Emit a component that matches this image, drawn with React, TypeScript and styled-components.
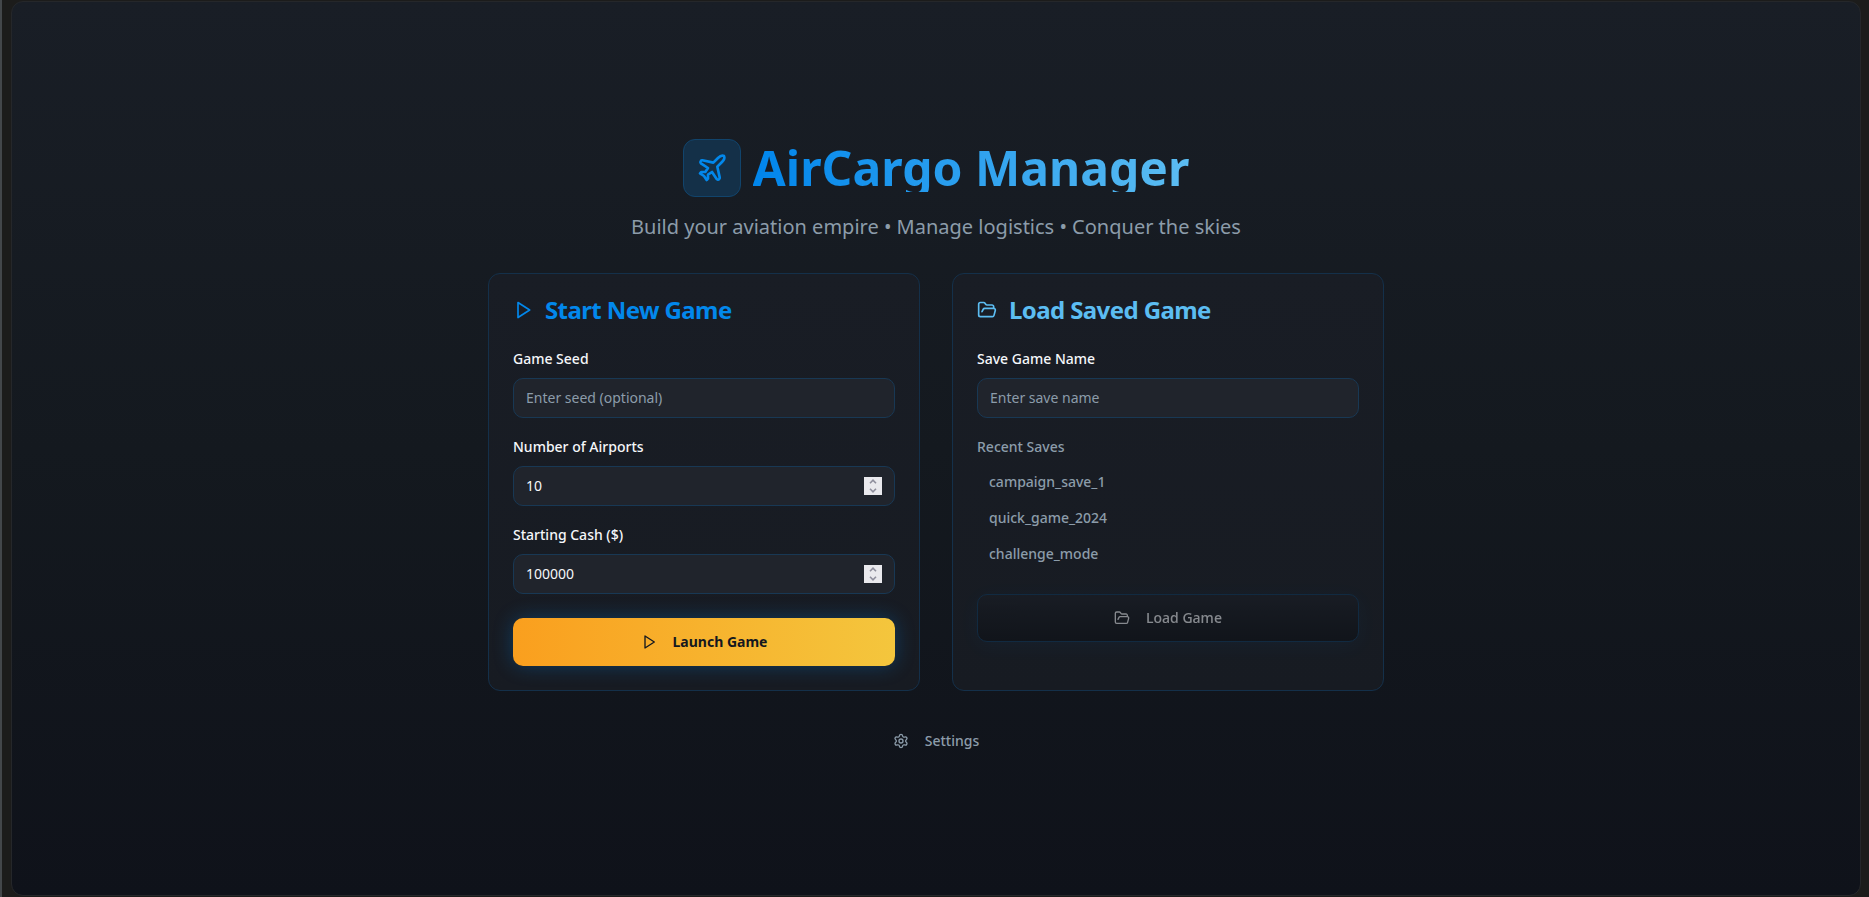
import React, { useState } from "react";
import styled, { createGlobalStyle, css } from "styled-components";
import { FolderOpen, Plane, Settings } from "lucide-react";

const GlobalStyle = createGlobalStyle`
  *, *::before, *::after { box-sizing: border-box; }
  body {
    margin: 0;
    background: #1c1c1b;
    color: #f5f7fa;
    font-family: "Noto Sans", "Open Sans", sans-serif;
    font-size: 14px;
  }
  button, input { font: inherit; color: inherit; }
  h1, h2, h3, p, ul { margin: 0; padding: 0; }
  svg { flex: none; }
`;

const Page = styled.div`
  display: flex;
  min-height: 100vh;
  padding: 1px 8px 1px 9px;
  border-left: 2px solid #43474a;
`;

const Screen = styled.main`
  flex: 1;
  display: flex;
  flex-direction: column;
  align-items: center;
  justify-content: center;
  gap: 32px;
  padding: 24px;
  border: 1px solid #25272a;
  border-radius: 12px;
  background: linear-gradient(180deg, #191e26 0%, #14191f 50%, #0f121a 100%);
`;

const Header = styled.header`
  display: flex;
  flex-direction: column;
  align-items: center;
  gap: 16px;
  text-align: center;
`;

const Brand = styled.div`
  display: flex;
  align-items: center;
  gap: 12px;
`;

const LogoTile = styled.div`
  display: flex;
  padding: 12px;
  border: 1px solid #11446c;
  border-radius: 12px;
  background: #143048;
  color: #0288ec;
`;

const Title = styled.h1`
  font-size: 48px;
  line-height: 48px;
  font-weight: 700;
  background: linear-gradient(90deg, #0085eb, #5cbdf2);
  background-clip: text;
  -webkit-background-clip: text;
  color: transparent;
`;

const Tagline = styled.p`
  font-size: 20px;
  line-height: 28px;
  color: #8c9caa;
`;

const Cards = styled.div`
  display: grid;
  grid-template-columns: repeat(auto-fit, minmax(320px, 1fr));
  gap: 32px;
  width: 100%;
  max-width: 896px;
`;

const Card = styled.section`
  display: flex;
  flex-direction: column;
  gap: 28px;
  padding: 24px;
  border: 1px solid #14304a;
  border-radius: 12px;
  background: linear-gradient(180deg, #191d25, #171b22);
`;

const CardTitle = styled.h2<{ $tone: string }>`
  display: flex;
  align-items: center;
  gap: 12px;
  font-size: 24px;
  line-height: 24px;
  font-weight: 700;
  letter-spacing: -0.025em;
  color: ${(p) => p.$tone};
`;

const Form = styled.form`
  display: flex;
  flex-direction: column;
  gap: 24px;
`;

const Fields = styled.div`
  display: flex;
  flex-direction: column;
  gap: 20px;
`;

const Field = styled.div`
  display: flex;
  flex-direction: column;
  gap: 10px;
`;

const captionText = css`
  font-size: 14px;
  line-height: 18px;
  font-weight: 500;
`;

const Label = styled.label`
  ${captionText}
`;

const Caption = styled.h3`
  ${captionText}
  color: #8c9caa;
`;

const InputWrap = styled.div`
  position: relative;
  display: flex;
`;

const Input = styled.input`
  width: 100%;
  height: 40px;
  padding: 0 12px;
  border: 1px solid #183854;
  border-radius: 10px;
  outline: none;
  background: #20242c;
  appearance: textfield;

  &::placeholder { color: #8c9caa; opacity: 1; }
  &::-webkit-inner-spin-button,
  &::-webkit-outer-spin-button { appearance: none; margin: 0; }
  &:focus-visible { border-color: #0288ec; }
`;

const Stepper = styled.div`
  position: absolute;
  top: 11px;
  right: 13px;
  display: flex;
  flex-direction: column;
  width: 18px;
  height: 18px;
  padding-top: 1px;
  background: #e9e9ed;
`;

const Step = styled.button`
  display: flex;
  flex: 1;
  align-items: center;
  justify-content: center;
  padding: 0;
  border: 0;
  background: none;
  color: #8f8f9d;
`;

const buttonBase = css`
  display: flex;
  align-items: center;
  justify-content: center;
  gap: 16px;
  border-radius: 10px;
  font-size: 14px;
  line-height: 20px;
  cursor: pointer;
`;

const LaunchButton = styled.button`
  ${buttonBase}
  height: 48px;
  border: 0;
  background: linear-gradient(90deg, #fa9f1e, #f4c63d);
  box-shadow: 0 0 20px rgba(2, 136, 236, 0.3);
  color: #14181f;
  font-weight: 700;
`;

const LoadButton = styled.button`
  ${buttonBase}
  height: 48px;
  border: 1px solid #0c3a60;
  background: linear-gradient(180deg, #1a1e26, #0c0f14);
  box-shadow: 0 4px 20px rgba(2, 136, 236, 0.1);
  font-weight: 500;
  opacity: 0.5;
`;

const SettingsButton = styled.button`
  ${buttonBase}
  height: 36px;
  padding: 0 12px;
  border: 0;
  background: none;
  color: #8c9caa;
  font-weight: 500;
`;

const SaveList = styled.ul`
  display: flex;
  flex-direction: column;
  gap: 4px;
  list-style: none;
`;

const SaveItem = styled.button`
  width: 100%;
  height: 32px;
  padding: 0 12px;
  border: 0;
  border-radius: 8px;
  background: none;
  color: #8c9caa;
  font-weight: 500;
  text-align: left;
  cursor: pointer;
`;

const recentSaves = ["campaign_save_1", "quick_game_2024", "challenge_mode"];

function PlayIcon({ size }: { size: number }) {
  return (
    <svg
      width={size}
      height={size}
      viewBox="0 0 24 24"
      fill="none"
      stroke="currentColor"
      strokeWidth="2"
      strokeLinecap="round"
      strokeLinejoin="round"
      aria-hidden="true"
    >
      <polygon points="6 3 20 12 6 21 6 3" />
    </svg>
  );
}

function Chevron({ down }: { down?: boolean }) {
  return (
    <svg width="8" height="5" viewBox="0 0 8 5" fill="none" stroke="currentColor" strokeWidth="1.6">
      <path d={down ? "M1 .8 4 3.8 7 .8" : "M1 4.2 4 1.2 7 4.2"} />
    </svg>
  );
}

interface NumberFieldProps {
  id: string;
  label: string;
  initial: number;
  step: number;
}

function NumberField({ id, label, initial, step }: NumberFieldProps) {
  const [value, setValue] = useState(initial);
  return (
    <Field>
      <Label htmlFor={id}>{label}</Label>
      <InputWrap>
        <Input id={id} type="number" value={value} onChange={(e) => setValue(Number(e.target.value))} />
        <Stepper>
          <Step type="button" aria-label={`Increase ${label}`} onClick={() => setValue(value + step)}>
            <Chevron />
          </Step>
          <Step type="button" aria-label={`Decrease ${label}`} onClick={() => setValue(value - step)}>
            <Chevron down />
          </Step>
        </Stepper>
      </InputWrap>
    </Field>
  );
}

export default function App() {
  const [saveName, setSaveName] = useState("");

  return (
    <>
      <GlobalStyle />
      <Page>
        <Screen>
          <Header>
            <Brand>
              <LogoTile>
                <Plane size={32} />
              </LogoTile>
              <Title>AirCargo Manager</Title>
            </Brand>
            <Tagline>Build your aviation empire • Manage logistics • Conquer the skies</Tagline>
          </Header>

          <Cards>
            <Card>
              <CardTitle $tone="#0288ec">
                <PlayIcon size={20} />
                Start New Game
              </CardTitle>
              <Form onSubmit={(e) => e.preventDefault()}>
                <Fields>
                  <Field>
                    <Label htmlFor="seed">Game Seed</Label>
                    <Input id="seed" type="text" placeholder="Enter seed (optional)" />
                  </Field>
                  <NumberField id="airports" label="Number of Airports" initial={10} step={1} />
                  <NumberField id="cash" label="Starting Cash ($)" initial={100000} step={1000} />
                </Fields>
                <LaunchButton type="submit">
                  <PlayIcon size={16} />
                  Launch Game
                </LaunchButton>
              </Form>
            </Card>

            <Card>
              <CardTitle $tone="#5cbdf2">
                <FolderOpen size={20} />
                Load Saved Game
              </CardTitle>
              <Form onSubmit={(e) => e.preventDefault()}>
                <Fields>
                  <Field>
                    <Label htmlFor="save-name">Save Game Name</Label>
                    <Input
                      id="save-name"
                      type="text"
                      placeholder="Enter save name"
                      value={saveName}
                      onChange={(e) => setSaveName(e.target.value)}
                    />
                  </Field>
                  <Field>
                    <Caption>Recent Saves</Caption>
                    <SaveList>
                      {recentSaves.map((name) => (
                        <li key={name}>
                          <SaveItem type="button" onClick={() => setSaveName(name)}>
                            {name}
                          </SaveItem>
                        </li>
                      ))}
                    </SaveList>
                  </Field>
                </Fields>
                <LoadButton type="submit" disabled={!saveName}>
                  <FolderOpen size={16} />
                  Load Game
                </LoadButton>
              </Form>
            </Card>
          </Cards>

          <SettingsButton type="button">
            <Settings size={16} />
            Settings
          </SettingsButton>
        </Screen>
      </Page>
    </>
  );
}
